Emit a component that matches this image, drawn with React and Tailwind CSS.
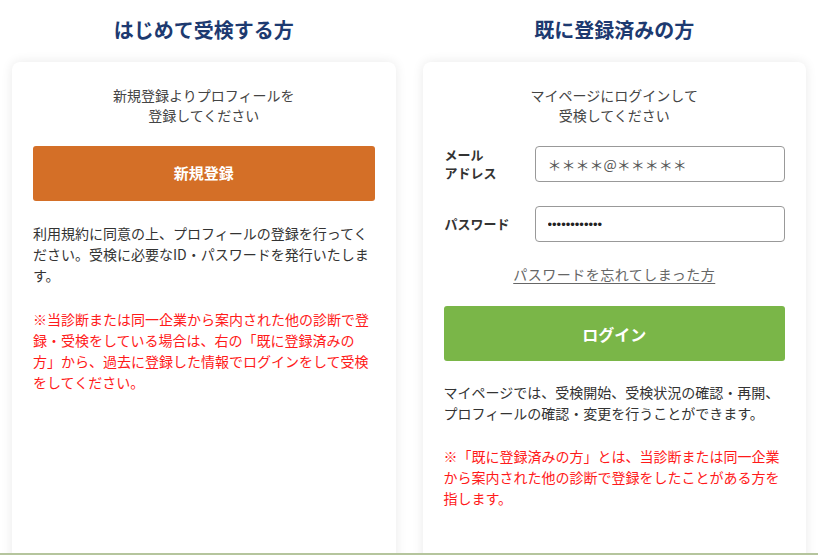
import React from 'react';

const font = { fontFamily: '"Noto Sans CJK JP", "Noto Sans", sans-serif' };

function Heading({ children }) {
  return (
    <h2 className="text-center text-[20px] leading-[30px] font-bold text-[#1d3a70] pt-[15px] mb-[17px]">
      {children}
    </h2>
  );
}

function NewUser() {
  return (
    <div>
      <Heading>はじめて受検する方</Heading>
      <div className="bg-white rounded-lg shadow-[0_0_12px_rgba(0,0,0,0.09)] px-[21px] pt-[23px] h-[520px]">
        <p className="text-center text-[14px] leading-[20px] text-[#444]">
          新規登録よりプロフィールを<br />登録してください
        </p>
        <button className="mt-[21px] w-full h-[55px] rounded-[3px] bg-[#d46f27] text-white text-[15px] font-bold">
          新規登録
        </button>
        <p className="mt-[22px] text-[14px] leading-[21px] text-[#333]">
          利用規約に同意の上、プロフィールの登録を行ってください。受検に必要なID・パスワードを発行いたします。
        </p>
        <p className="mt-[23px] text-[14px] leading-[21px] text-[#ff1a1a]">
          ※当診断または同一企業から案内された他の診断で登録・受検をしている場合は、右の「既に登録済みの方」から、過去に登録した情報でログインをして受検をしてください。
        </p>
      </div>
    </div>
  );
}

function Member() {
  return (
    <div>
      <Heading>既に登録済みの方</Heading>
      <div className="bg-white rounded-lg shadow-[0_0_12px_rgba(0,0,0,0.09)] px-[21px] pt-[23px] h-[520px]">
        <p className="text-center text-[14px] leading-[20px] text-[#444]">
          マイページにログインして<br />受検してください
        </p>
        <div className="mt-[21px] grid grid-cols-[91px_1fr] items-center gap-y-[24px]">
          <label className="text-[13px] leading-[18px] font-bold text-[#333] pl-px">
            メール<br />アドレス
          </label>
          <input
            readOnly
            placeholder="＊＊＊＊@＊＊＊＊＊"
            className="h-[36px] w-full rounded-[4px] border border-[#999] px-[12px] text-[14px] placeholder:text-[#555] outline-none"
          />
          <label className="text-[13px] leading-[18px] font-bold text-[#333] pl-px">パスワード</label>
          <input
            readOnly
            type="password"
            value="abcdefghijkl"
            className="h-[36px] w-full rounded-[4px] border border-[#999] px-[12px] text-[13px] text-[#222] outline-none"
            style={{ fontFamily: '"Liberation Sans", sans-serif' }}
          />
        </div>
        <div className="mt-[21px] text-center text-[14px] leading-[22px] tracking-[0.5px]">
          <a href="#" className="text-[#666] underline underline-offset-[3px]">パスワードを忘れてしまった方</a>
        </div>
        <button className="mt-[21px] w-full h-[55px] rounded-[3px] bg-[#7ab648] text-white text-[16px] font-bold">
          ログイン
        </button>
        <p className="mt-[21px] text-[14px] leading-[21px] text-[#333]">
          マイページでは、受検開始、受検状況の確認・再開、プロフィールの確認・変更を行うことができます。
        </p>
        <p className="mt-[22px] text-[14px] leading-[21px] text-[#ff1a1a]">
          ※「既に登録済みの方」とは、当診断または同一企業から案内された他の診断で登録をしたことがある方を指します。
        </p>
      </div>
    </div>
  );
}

export default function App() {
  return (
    <div className="h-[555px] flex flex-col bg-white" style={font}>
      <div className="flex-1 overflow-hidden">
        <div className="grid grid-cols-2 gap-[27px] px-[12px]">
          <NewUser />
          <Member />
        </div>
      </div>
      <div className="h-[2px] bg-[#b5c59d]" />
    </div>
  );
}
